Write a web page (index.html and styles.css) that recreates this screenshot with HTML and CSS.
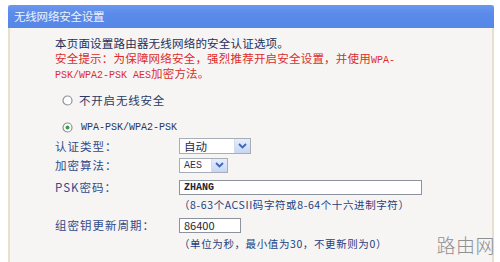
FILE: index.html
```html
<!DOCTYPE html>
<html lang="zh">
<head>
<meta charset="utf-8">
<title>无线网络安全设置</title>
<link rel="stylesheet" href="styles.css">
</head>
<body>
<div class="page">
  <div class="panel">
    <div class="header">无线网络安全设置</div>
    <div class="content">
      <p class="intro">本页面设置路由器无线网络的安全认证选项。</p>
      <p class="warn">安全提示：为保障网络安全，强烈推荐开启安全设置，并使用<span class="mono">WPA-</span></p>
      <p class="warn"><span class="mono">PSK/WPA2-PSK AES</span>加密方法。</p>

      <div class="radio-row first">
        <svg class="radio" width="11" height="11" viewBox="0 0 11 11"><circle cx="5.5" cy="5.5" r="4.5" fill="#fff" stroke="#8c9097" stroke-width="1.2"/></svg>
        <span class="opt">不开启无线安全</span>
      </div>
      <div class="radio-row second">
        <svg class="radio" width="11" height="11" viewBox="0 0 11 11"><circle cx="5.5" cy="5.5" r="4.5" fill="#fff" stroke="#8c9097" stroke-width="1.2"/><circle cx="5.5" cy="5.5" r="2" fill="#3f9a4c"/></svg>
        <span class="mono">WPA-PSK/WPA2-PSK</span>
      </div>

      <div class="row r-auth">
        <span class="label">认证类型：</span>
        <div class="select s-auth"><span class="val">自动</span><span class="btn"><svg width="9" height="6" viewBox="0 0 9 6"><path d="M1 1 L4.5 4.5 L8 1" fill="none" stroke="#3f66b8" stroke-width="1.8"/></svg></span></div>
      </div>
      <div class="row r-enc">
        <span class="label">加密算法：</span>
        <div class="select s-enc"><span class="val mono small">AES</span><span class="btn"><svg width="9" height="6" viewBox="0 0 9 6"><path d="M1 1 L4.5 4.5 L8 1" fill="none" stroke="#3f66b8" stroke-width="1.8"/></svg></span></div>
      </div>
      <div class="row r-psk">
        <span class="label">PSK密码：</span>
        <div class="input i-psk mono bold">ZHANG</div>
      </div>
      <div class="hint h-psk">（8-63个ACSII码字符或8-64个十六进制字符）</div>
      <div class="row r-group">
        <span class="label">组密钥更新周期：</span>
        <div class="input i-group">86400</div>
      </div>
      <div class="hint h-group">（单位为秒，最小值为30，不更新则为0）</div>
    </div>
  </div>
  <div class="watermark">路由网</div>
</div>
</body>
</html>
```

FILE: styles.css
```css
html, body {
  margin: 0;
  padding: 0;
  background: #ffffff;
  width: 500px;
  height: 262px;
  overflow: hidden;
}
body {
  font-family: "Noto Sans CJK SC", "Noto Sans", sans-serif;
  font-size: 11.5px;
  color: #22345e;
}
.page {
  position: relative;
  padding: 5px 6px 0 8px;
  height: 257px;
}
.panel {
  height: 257px;
  background: #f6f5f4;
  border-left: 2px solid #eadfcc;
  border-right: 2px solid #eadfcc;
  box-sizing: border-box;
}
.header {
  height: 23px;
  margin: 0 -2px;
  background: linear-gradient(#6b98ee, #5a8aea 40%, #5686e6);
  border-radius: 3px 3px 0 0;
  color: #eef3ff;
  line-height: 23px;
  padding-left: 6px;
  font-size: 11.5px;
  letter-spacing: -0.2px;
}
.content {
  padding: 8px 0 0 45px;
}
p {
  margin: 0;
  line-height: 15px;
  height: 15px;
  white-space: nowrap;
}
.intro { color: #1f2f58; letter-spacing: 0.2px; }
.warn { color: #dc2c2c; letter-spacing: 0.2px; }
.mono {
  font-family: "Liberation Mono", "DejaVu Sans Mono", monospace;
  font-size: 10px;
  letter-spacing: 0;
}
.small { font-size: 10px; }
.bold { font-weight: bold; }

.radio-row {
  display: flex;
  align-items: center;
  height: 16px;
  padding-left: 7px;
  gap: 6px;
  color: #2a3a62;
}
.opt { letter-spacing: 0.8px; }
.radio-row.first { margin-top: 11px; }
.radio-row.second { margin-top: 11px; }
.radio-row.second .mono { color: #2a3560; margin-left: 2px; }

.row {
  display: flex;
  align-items: center;
  height: 18px;
}
.label {
  width: 124px;
  flex: none;
  color: #33498a;
  white-space: nowrap;
  letter-spacing: 1px;
}
.r-auth { margin-top: 2px; }
.r-enc { margin-top: 1px; }
.r-psk { margin-top: 4px; }
.r-group { margin-top: 4px; }

.select {
  display: flex;
  align-items: center;
  justify-content: space-between;
  height: 15px;
  background: #fff;
  border: 1px solid #a7aeb8;
  box-sizing: border-box;
  padding-left: 4px;
  color: #1e2b4c;
}
.s-auth { width: 72px; height: 16px; }
.s-enc { width: 49px; }
.s-enc .val { color: #27335a; }
.btn {
  width: 15px;
  height: 100%;
  display: flex;
  align-items: center;
  justify-content: center;
  background: linear-gradient(#e6eefb, #c6d6f3);
  border-left: 1px solid #d4ddec;
}
.input {
  height: 15px;
  background: #fff;
  border: 1px solid #8d939c;
  box-sizing: border-box;
  padding-left: 4px;
  line-height: 13px;
  color: #1e2533;
}
.i-psk { width: 243px; }
.i-group { width: 62px; font-size: 11px; }

.hint {
  margin-left: 124px;
  height: 14px;
  line-height: 14px;
  color: #243f80;
  font-size: 10.5px;
  letter-spacing: 0.6px;
  white-space: nowrap;
}
.h-psk { margin-top: 2px; }
.h-group { margin-top: 3px; }

.watermark {
  position: absolute;
  right: 5px;
  bottom: 4px;
  font-size: 19px;
  letter-spacing: 0.5px;
  color: #909090;
  font-weight: 300;
}
```
